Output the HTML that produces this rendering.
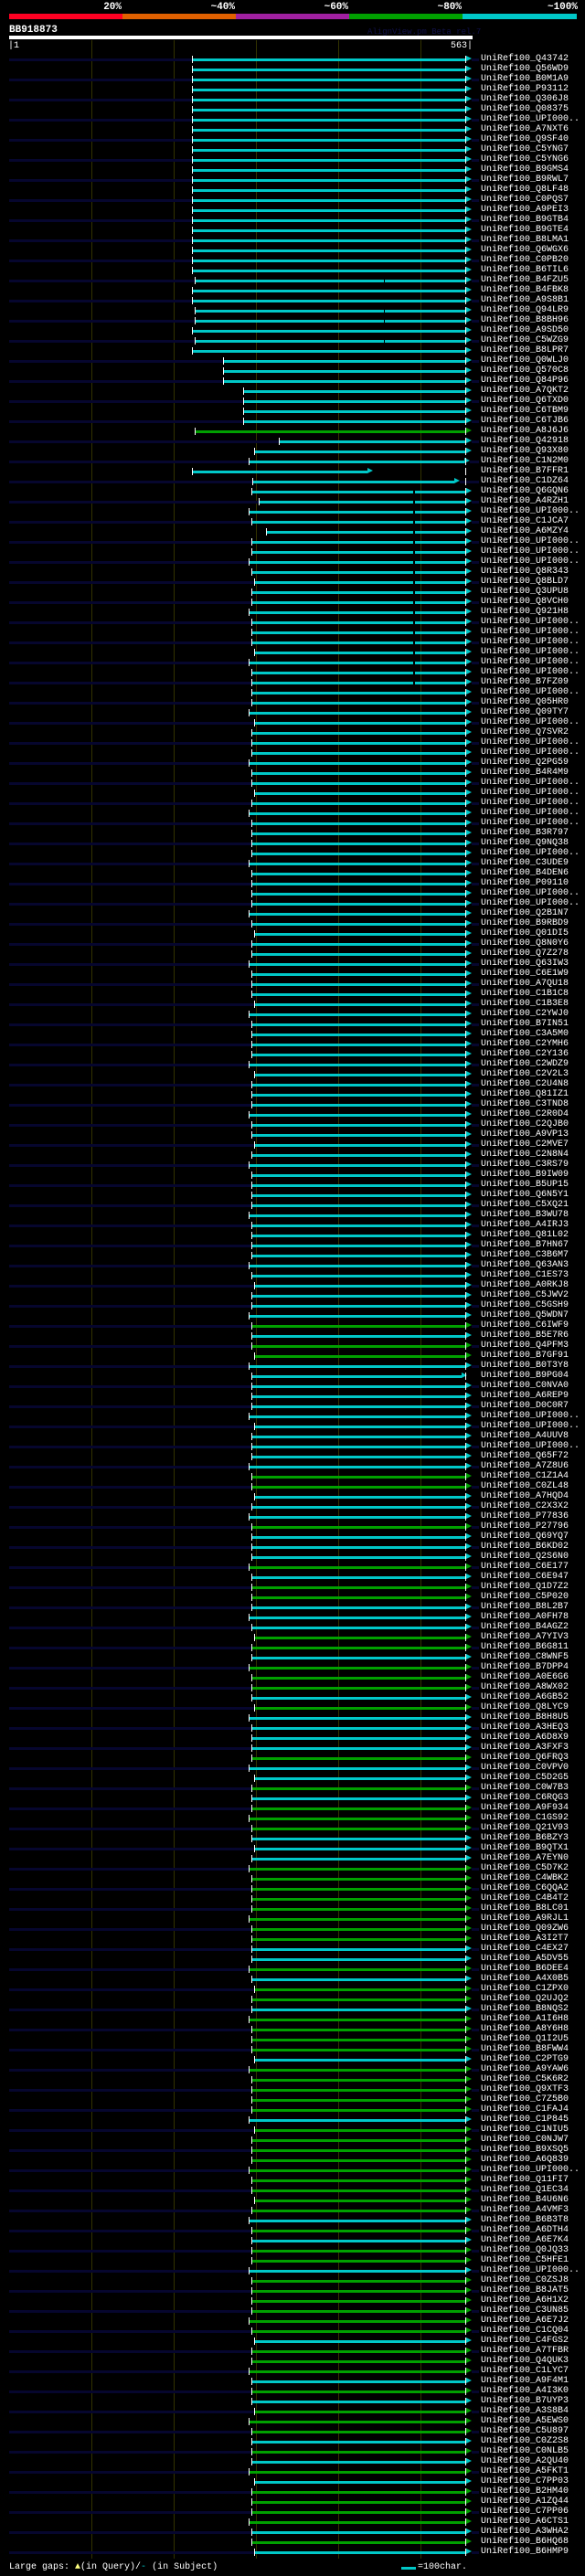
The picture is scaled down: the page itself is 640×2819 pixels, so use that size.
<!DOCTYPE html>
<html><head><meta charset="utf-8">
<style>
html,body{margin:0;padding:0;background:#000;}
body{width:640px;height:2819px;position:relative;overflow:hidden;font-family:"Liberation Mono",monospace;color:#fff;}
.a{position:absolute;}
.pct{position:absolute;top:2px;font:bold 11px "Liberation Mono",monospace;color:#fff;text-align:right;width:60px;}
#labels{position:absolute;left:526px;top:59px;margin:0;font:10px/11px "Liberation Mono",monospace;color:#fff;white-space:pre;}
</style></head><body>
<div class="pct" style="left:73px">20%</div>
<div class="pct" style="left:197px">~40%</div>
<div class="pct" style="left:321px">~60%</div>
<div class="pct" style="left:445px">~80%</div>
<div class="pct" style="left:572px">~100%</div>
<div class="a" style="left:10px;top:15px;width:124px;height:6px;background:#ff0022"></div>
<div class="a" style="left:134px;top:15px;width:124px;height:6px;background:#e06000"></div>
<div class="a" style="left:258px;top:15px;width:124px;height:6px;background:#a020a0"></div>
<div class="a" style="left:382px;top:15px;width:124px;height:6px;background:#00a000"></div>
<div class="a" style="left:506px;top:15px;width:125px;height:6px;background:#00c8c8"></div>
<div class="a" style="left:10px;top:27px;font:bold 11px 'Liberation Mono',monospace;">BB918873</div>
<div class="a" style="left:402px;top:30px;font:9px 'Liberation Mono',monospace;color:#101048;">AlignView.pm Beta rel.7</div>
<div class="a" style="left:10px;top:39px;width:507px;height:4px;background:#fff"></div>
<div class="a" style="left:9px;top:45px;font:10px 'Liberation Mono',monospace;">|1</div>
<div class="a" style="left:493px;top:45px;font:10px 'Liberation Mono',monospace;">563|</div>
<div id="g"></div>
<pre id="labels">UniRef100_Q43742
UniRef100_Q56WD9
UniRef100_B0M1A9
UniRef100_P93112
UniRef100_Q306J8
UniRef100_Q08375
UniRef100_UPI000..
UniRef100_A7NXT6
UniRef100_Q9SF40
UniRef100_C5YNG7
UniRef100_C5YNG6
UniRef100_B9GMS4
UniRef100_B9RWL7
UniRef100_Q8LF48
UniRef100_C0PQS7
UniRef100_A9PEI3
UniRef100_B9GTB4
UniRef100_B9GTE4
UniRef100_B8LMA1
UniRef100_Q6WGX6
UniRef100_C0PB20
UniRef100_B6TIL6
UniRef100_B4FZU5
UniRef100_B4FBK8
UniRef100_A9S8B1
UniRef100_Q94LR9
UniRef100_B8BH96
UniRef100_A9SD50
UniRef100_C5WZG9
UniRef100_B8LPR7
UniRef100_Q0WLJ0
UniRef100_Q570C8
UniRef100_Q84P96
UniRef100_A7QKT2
UniRef100_Q6TXD0
UniRef100_C6TBM9
UniRef100_C6TJB6
UniRef100_A8J6J6
UniRef100_Q42918
UniRef100_Q93X80
UniRef100_C1N2M0
UniRef100_B7FFR1
UniRef100_C1DZ64
UniRef100_Q6GQN6
UniRef100_A4RZH1
UniRef100_UPI000..
UniRef100_C1JCA7
UniRef100_A6MZY4
UniRef100_UPI000..
UniRef100_UPI000..
UniRef100_UPI000..
UniRef100_Q8R343
UniRef100_Q8BLD7
UniRef100_Q3UPU8
UniRef100_Q8VCH0
UniRef100_Q921H8
UniRef100_UPI000..
UniRef100_UPI000..
UniRef100_UPI000..
UniRef100_UPI000..
UniRef100_UPI000..
UniRef100_UPI000..
UniRef100_B7FZ09
UniRef100_UPI000..
UniRef100_Q05HR0
UniRef100_Q09TY7
UniRef100_UPI000..
UniRef100_Q7SVR2
UniRef100_UPI000..
UniRef100_UPI000..
UniRef100_Q2PG59
UniRef100_B4R4M9
UniRef100_UPI000..
UniRef100_UPI000..
UniRef100_UPI000..
UniRef100_UPI000..
UniRef100_UPI000..
UniRef100_B3R797
UniRef100_Q9NQ38
UniRef100_UPI000..
UniRef100_C3UDE9
UniRef100_B4DEN6
UniRef100_P09110
UniRef100_UPI000..
UniRef100_UPI000..
UniRef100_Q2B1N7
UniRef100_B9RBD9
UniRef100_Q01DI5
UniRef100_Q8N0Y6
UniRef100_Q7Z278
UniRef100_Q63IW3
UniRef100_C6E1W9
UniRef100_A7QU18
UniRef100_C1B1C8
UniRef100_C1B3E8
UniRef100_C2YWJ0
UniRef100_B7IN51
UniRef100_C3A5M0
UniRef100_C2YMH6
UniRef100_C2Y136
UniRef100_C2WDZ9
UniRef100_C2V2L3
UniRef100_C2U4N8
UniRef100_Q81IZ1
UniRef100_C3TND8
UniRef100_C2R0D4
UniRef100_C2QJB0
UniRef100_A9VP13
UniRef100_C2MVE7
UniRef100_C2N8N4
UniRef100_C3RS79
UniRef100_B9IW09
UniRef100_B5UP15
UniRef100_Q6N5Y1
UniRef100_C5XQ21
UniRef100_B3WU78
UniRef100_A4IRJ3
UniRef100_Q81L02
UniRef100_B7HN67
UniRef100_C3B6M7
UniRef100_Q63AN3
UniRef100_C1ES73
UniRef100_A0RKJ8
UniRef100_C5JWV2
UniRef100_C5GSH9
UniRef100_Q5WDN7
UniRef100_C6IWF9
UniRef100_B5E7R6
UniRef100_Q4PFM3
UniRef100_B7GF91
UniRef100_B0T3Y8
UniRef100_B9PG04
UniRef100_C0NVA0
UniRef100_A6REP9
UniRef100_D0C0R7
UniRef100_UPI000..
UniRef100_UPI000..
UniRef100_A4UUV8
UniRef100_UPI000..
UniRef100_Q65F72
UniRef100_A7Z8U6
UniRef100_C1Z1A4
UniRef100_C0ZL48
UniRef100_A7HQD4
UniRef100_C2X3X2
UniRef100_P77836
UniRef100_P27796
UniRef100_Q69YQ7
UniRef100_B6KD02
UniRef100_Q2S6N0
UniRef100_C6E177
UniRef100_C6E947
UniRef100_Q1D7Z2
UniRef100_C5P020
UniRef100_B8L2B7
UniRef100_A0FH78
UniRef100_B4AGZ2
UniRef100_A7YIV3
UniRef100_B6G811
UniRef100_C8WNF5
UniRef100_B7DPP4
UniRef100_A0E6G6
UniRef100_A8WX02
UniRef100_A6GB52
UniRef100_Q8LYC9
UniRef100_B8H8U5
UniRef100_A3HEQ3
UniRef100_A6D8X9
UniRef100_A3FXF3
UniRef100_Q6FRQ3
UniRef100_C0VPV0
UniRef100_C5D2G5
UniRef100_C0W7B3
UniRef100_C6RQG3
UniRef100_A9F934
UniRef100_C1GS92
UniRef100_Q21V93
UniRef100_B6BZY3
UniRef100_B9QTX1
UniRef100_A7EYN0
UniRef100_C5D7K2
UniRef100_C4WBK2
UniRef100_C6QQA2
UniRef100_C4B4T2
UniRef100_B8LC01
UniRef100_A9RJL1
UniRef100_Q09ZW6
UniRef100_A3I2T7
UniRef100_C4EX27
UniRef100_A5DV55
UniRef100_B6DEE4
UniRef100_A4X0B5
UniRef100_C1ZPX0
UniRef100_Q2UJQ2
UniRef100_B8NQS2
UniRef100_A1I6H8
UniRef100_A8Y6H8
UniRef100_Q1I2U5
UniRef100_B8FWW4
UniRef100_C2PTG9
UniRef100_A9YAW6
UniRef100_C5K6R2
UniRef100_Q9XTF3
UniRef100_C7Z5B0
UniRef100_C1FAJ4
UniRef100_C1P845
UniRef100_C1NIU5
UniRef100_C0NJW7
UniRef100_B9XSQ5
UniRef100_A6Q839
UniRef100_UPI000..
UniRef100_Q11FI7
UniRef100_Q1EC34
UniRef100_B4U6N6
UniRef100_A4VMF3
UniRef100_B6B3T8
UniRef100_A6DTH4
UniRef100_A6E7K4
UniRef100_Q0JQ33
UniRef100_C5HFE1
UniRef100_UPI000..
UniRef100_C0ZSJ8
UniRef100_B8JAT5
UniRef100_A6H1X2
UniRef100_C3UN85
UniRef100_A6E7J2
UniRef100_C1CQ04
UniRef100_C4FGS2
UniRef100_A7TFBR
UniRef100_Q4QUK3
UniRef100_C1LYC7
UniRef100_A9F4M1
UniRef100_A4I3K0
UniRef100_B7UYP3
UniRef100_A3S8B4
UniRef100_A5EWS0
UniRef100_C5U897
UniRef100_C0Z2S8
UniRef100_C0NLB5
UniRef100_A2QU40
UniRef100_A5FKT1
UniRef100_C7PP03
UniRef100_B2HM40
UniRef100_A1ZQ44
UniRef100_C7PP06
UniRef100_A6CTS1
UniRef100_A3WHA2
UniRef100_B6HQ68
UniRef100_B6HMP9</pre>
<div class="a" style="left:10px;top:2804px;font:10px 'Liberation Mono',monospace;">Large gaps: <span style="color:#ffff80">&#9650;</span>(in Query)/<span style="color:#00c8c8">-</span> (in Subject)</div>
<div class="a" style="left:439px;top:2809px;width:16px;height:3px;background:#00c8c8"></div>
<div class="a" style="left:457px;top:2804px;font:10px 'Liberation Mono',monospace;">=100char.</div>
<script>
(function(){
var N=249,h='';
var C='#00c8c8',G='#00a000';
var green={37:1,126:1,128:1,129:1,141:1,142:1,146:1};
[150,152,153,157,158,160,161,162,164,169,172,174,175,176,180,181,182,183,184,185,186,187,190,192,193,195,196,197,198,200,201,202,203,245,247].forEach(function(r){green[r]=1;});
var cy={199:1,205:1,215:1,217:1,220:1,227:1,231:1,233:1,237:1,239:1,241:1};
for(var r=204;r<=244;r++){if(!cy[r])green[r]=1;}
// grid
[100,190,280,370,460].forEach(function(x){h+='<div class="a" style="left:'+x+'px;top:44px;width:1px;height:2756px;background:#333300"></div>';});
for(var i=0;i<N;i++){
 var y=65+11*i,s,e=510;
 if(i<30)s=(i==22||i==25||i==26||i==28)?213:210;
 else if(i<33)s=244;else if(i<37)s=266;
 else if(i==37)s=213;else if(i==38)s=305;else if(i==39)s=278;
 else if(i==40){s=272;e=508;}else if(i==41){s=210;e=402;}else if(i==42){s=276;e=497;}
 else if(i==44)s=283;else if(i==47)s=291;
 else {s=(i*7%5==0)?272:((i%7==3)?278:275);}
 if(i==131)e=505;
 var col=green[i]?G:C;
 if(i%2==0){
  h+='<div class="a" style="left:10px;top:'+(y-1)+'px;width:'+(s-10)+'px;height:3px;background:#06062e"></div>';
  h+='<div class="a" style="left:'+(e+6)+'px;top:'+(y-1)+'px;width:'+(526-e-8)+'px;height:3px;background:#06062e"></div>';
 }
 h+='<div class="a" style="left:'+s+'px;top:'+(y-1)+'px;width:'+(e-s)+'px;height:3px;background:'+col+'"></div>';
 h+='<div class="a" style="left:'+e+'px;top:'+(y-4)+'px;width:0;height:0;border-top:3.5px solid transparent;border-bottom:3.5px solid transparent;border-left:6px solid '+col+'"></div>';
 h+='<div class="a" style="left:'+s+'px;top:'+(y-4)+'px;width:1px;height:8px;background:#fff"></div>';
 h+='<div class="a" style="left:509px;top:'+(y-4)+'px;width:1px;height:8px;background:#fff"></div>';
 if(i==22||i==25||i==26||i==28)h+='<div class="a" style="left:420px;top:'+(y-1)+'px;width:1px;height:3px;background:#000"></div>';
 if(i>=43&&i<=62)h+='<div class="a" style="left:452px;top:'+(y-1)+'px;width:2px;height:3px;background:#000"></div>';
}
document.getElementById('g').innerHTML=h;
})();
</script>
</body></html>
